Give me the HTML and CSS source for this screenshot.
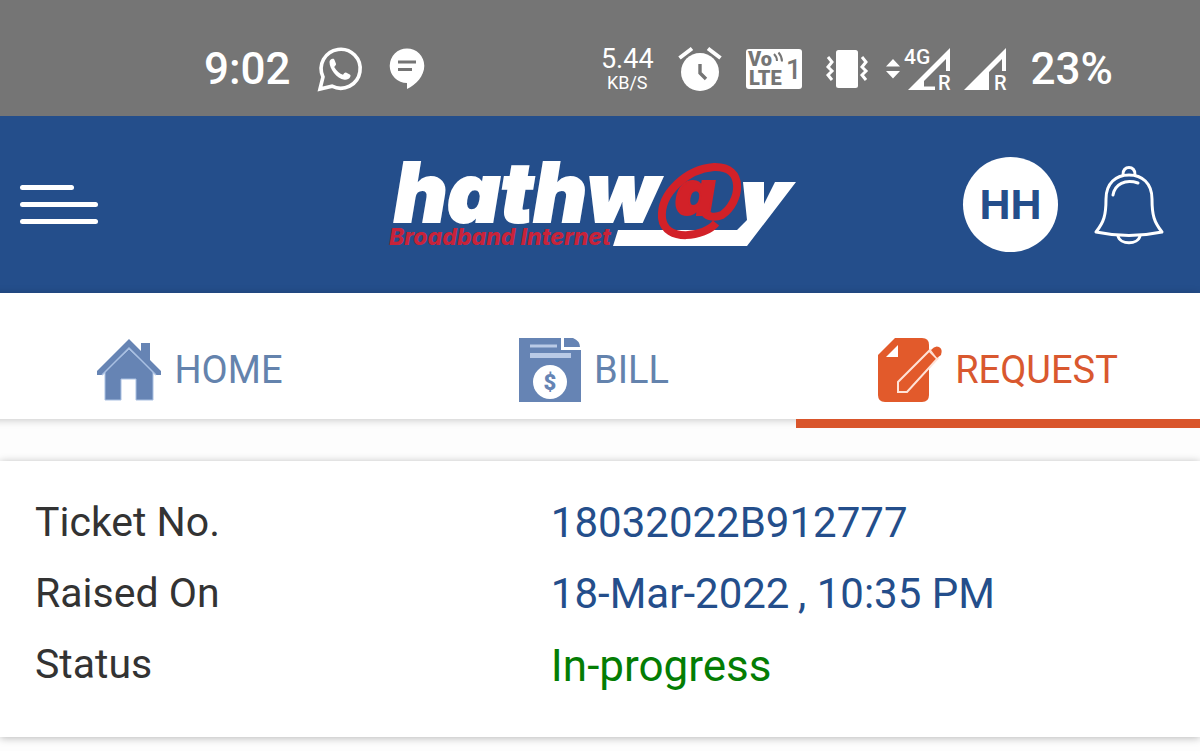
FILE: index.html
```html
<!DOCTYPE html>
<html lang="en">
<head>
<meta charset="utf-8">
<meta name="viewport" content="width=device-width, initial-scale=1">
<title>Hathway – Request</title>
<link rel="stylesheet" href="styles.css">
</head>
<body>
<div class="status-bar">
  <div class="status-group status-left">
    <span class="status-time">9:02</span>
    <svg class="icon" width="44" height="44" viewBox="0 0 44 44" aria-hidden="true">
      <path d="M2 42 5 30A19.500 19.500 0 1 1 14 39.200Z" fill="none" stroke="#fff" stroke-width="3.600" stroke-linejoin="miter"/>
      <path d="M11.500 15c0-2 2-3.500 3.500-3.200 1 0 1.300.6 1.700 1.600l1.200 3c.4 1-.1 1.700-1.700 3.500 2.300 4.200 5.500 6.600 8.800 7.900 1.300-1.700 2-2.600 3-2.200l3.800 1.900c1 .5.8 1.500.4 2.500-.9 2.200-3.600 3-5.700 2.700C18.500 31.500 11.500 22 11.500 15Z" fill="#fff"/>
    </svg>
    <svg class="icon" width="36" height="42" viewBox="0 0 36 42" aria-hidden="true">
      <path d="M18 .5a17.300 17.300 0 1 0 0 34.600V41c9-4 17.300-13 17.300-23.200A17.300 17.300 0 0 0 18 .5Z" fill="#fff"/>
      <path d="M9 14h18M9 21.500h14" stroke="#757575" stroke-width="3"/>
    </svg>
  </div>
  <div class="status-group status-right">
    <div class="net-speed"><span class="net-value">5.44</span><span class="net-unit">KB/S</span></div>
    <svg class="icon" width="44" height="46" viewBox="0 0 44 46" aria-hidden="true">
      <circle cx="22" cy="26" r="19" fill="#fff"/>
      <path d="M1.500 12 14 2.500M42.500 12 30 2.500" stroke="#fff" stroke-width="4"/>
      <path d="M22 18v9l6 6" fill="none" stroke="#757575" stroke-width="3.400"/>
    </svg>
    <svg class="icon" width="56" height="40" viewBox="0 0 56 40" role="img" aria-label="VoLTE 1">
      <rect width="56" height="40" rx="3" fill="#fff"/>
      <g fill="#757575" font-family="Roboto, sans-serif" font-weight="900">
        <text x="2" y="17" font-size="20">Vo</text>
        <text x="3" y="36" font-size="20">LTE</text>
        <text x="40" y="30" font-size="27" font-weight="500">1</text>
      </g>
      <path d="M28 5q3 3 3 7M32.500 3.500q3.500 4 3.500 9" fill="none" stroke="#757575" stroke-width="2"/>
    </svg>
    <svg class="icon" width="42" height="38" viewBox="0 0 42 38" aria-hidden="true">
      <rect x="10" width="22" height="38" rx="2.500" fill="#fff"/>
      <path d="m2 7 4 5-4 5 4 4-4 4 4 5M40 30l-4-5 4-4-4-4 4-5-4-5" fill="none" stroke="#fff" stroke-width="3"/>
    </svg>
    <svg class="icon signal-data" width="65" height="44" viewBox="0 0 65 44" role="img" aria-label="4G roaming">
      <path d="M0 19.500 7 12l7 7.500ZM0 24h14l-7 7.500Z" fill="#fff"/>
      <g fill="#fff" font-family="Roboto, sans-serif" font-weight="500">
        <text x="18" y="17" font-size="21">4G</text>
        <text x="52" y="43" font-size="20">R</text>
      </g>
      <path fill-rule="evenodd" d="M22 43 64 1v23h-4V12L38 34v5.500l11 0V43Z" fill="#fff"/>
    </svg>
    <svg class="icon" width="43" height="44" viewBox="0 0 43 44" role="img" aria-label="Second SIM roaming">
      <path d="M0 43 42 1v23h-4V12L25 25v18Z" fill="#fff"/>
      <text x="30" y="43" fill="#fff" font-family="Roboto, sans-serif" font-weight="500" font-size="20">R</text>
    </svg>
    <span class="status-battery">23%</span>
  </div>
</div>

<header class="app-header">
  <button class="menu-button" type="button" aria-label="Menu">
    <span class="menu-line menu-line-short"></span>
    <span class="menu-line"></span>
    <span class="menu-line"></span>
  </button>
  <a class="logo" href="#" aria-label="Hathway Broadband Internet">
    <svg class="icon" width="406" height="88" viewBox="0 0 406 88" aria-hidden="true">
      <text class="logo-word" x="5" y="61">hathw</text>
      <path d="M229 69H348L358 59 354 21H375L375 43 386 21H407L358 85H224Z" fill="#fff"/>
      <text class="logo-at" x="286" y="54">a</text>
      <path d="M327 62C316 76 276 82 273 57 271 32 298 8 325 6 357 5 352 41 333 54 326 57 319 56 316 52" fill="none" stroke="#d22128" stroke-width="8"/>
      <text class="logo-tag" x="0" y="84">Broadband Internet</text>
    </svg>
  </a>
  <div class="header-actions">
    <button class="avatar" type="button" aria-label="Account HH">HH</button>
    <button class="bell-button" type="button" aria-label="Notifications">
      <svg class="icon" width="70" height="80" viewBox="0 0 70 80" aria-hidden="true">
        <g fill="none" stroke="#fff" stroke-width="3" stroke-linejoin="round" stroke-linecap="round">
          <path d="M2 67C10 57 12 50 12 34 12 18 22 10 35 10S58 18 58 34C58 50 60 57 68 67Q35 74 2 67Z"/>
          <path d="M29 10C28 0 42 0 41 10M24 71C26 80 44 80 46 71"/>
          <path d="M19 30C21 19 31 14 44 18"/>
        </g>
      </svg>
    </button>
  </div>
</header>

<nav class="tabs" aria-label="Main">
  <a class="tab" href="#">
    <svg class="icon" width="64" height="64" viewBox="0 0 64 64" aria-hidden="true">
      <path d="M8 33 32 11 56 33V62H39V41H24V62H8Z" fill="#6684b4" stroke="#a9c0e2" stroke-width="1"/>
      <path d="M0 33 32 1 44 13V5H53V22L64 33V37H59L32 10 5 37H0Z" fill="#6684b4"/>
      <path d="m5 37 27-27 27 27" fill="none" stroke="#a9c0e2" stroke-width="1.500"/>
    </svg>
    HOME
  </a>
  <a class="tab" href="#">
    <svg class="icon" width="62" height="64" viewBox="0 0 62 64" aria-hidden="true">
      <path d="M0 0H42V12H62V64H0ZM45 0H54Q61 3 61 9H45Z" fill="#6684b4"/>
      <path d="M11 8h27" stroke="#b9cae6" stroke-width="3"/>
      <path d="M11 17.500h41" stroke="#b9cae6" stroke-width="5"/>
      <circle cx="31" cy="44" r="17" fill="#fff"/>
      <text x="31" y="52" text-anchor="middle" font-family="Roboto, sans-serif" font-weight="900" font-size="22" fill="#6684b4">$</text>
    </svg>
    BILL
  </a>
  <a class="tab tab-active" href="#" aria-current="page">
    <svg class="icon" width="64" height="64" viewBox="0 0 64 64" aria-hidden="true">
      <path d="M17 0H44Q51 0 51 7V57Q51 64 44 64H7Q0 64 0 57V17Z" fill="#e25a2b"/>
      <path d="M8 19H20V7Z" fill="#fff"/>
      <path d="M20 54V44L52 12 60 20 29 54Z" fill="#e25a2b" stroke="#ffe3d8" stroke-width="2"/>
      <path d="M53 12q4-5 8-3t2 8l-4 3Z" fill="#e25a2b"/>
      <path d="m51 13 8 8" stroke="#ffe3d8" stroke-width="1.500"/>
    </svg>
    REQUEST
  </a>
</nav>

<main class="content">
  <section class="ticket-card" aria-label="Ticket details">
    <dl class="ticket-details">
      <dt>Ticket No.</dt><dd>18032022B912777</dd>
      <dt>Raised On</dt><dd>18-Mar-2022&thinsp;, 10:35 PM</dd>
      <dt>Status</dt><dd class="ticket-status">In-progress</dd>
    </dl>
  </section>
</main>
</body>
</html>
```
FILE: styles.css
```css
* {
  box-sizing: border-box;
}

body {
  margin: 0;
  background: #fdfdfd;
  color: #333;
  font-family: Roboto, sans-serif;
  overflow-x: hidden;
}

button {
  margin: 0;
  padding: 0;
  border: 0;
  background: none;
  font: inherit;
  cursor: pointer;
}

a {
  color: inherit;
  text-decoration: none;
}

.icon {
  display: block;
  flex: none;
  overflow: visible;
}

.status-bar {
  display: flex;
  align-items: center;
  justify-content: space-between;
  padding: 40px 87px 18px 204px;
  background: #757575;
  color: #fff;
}

.status-group {
  display: flex;
  align-items: center;
  height: 58px;
}

.status-left {
  gap: 27px;
}

.status-right {
  gap: 24px;
}

.signal-data {
  margin: 0 -11px 0 -6px;
}

.status-time,
.status-battery {
  font-size: 44px;
  font-weight: 500;
  line-height: 58px;
}

.net-speed {
  display: flex;
  flex-direction: column;
  align-items: center;
}

.net-value {
  font-size: 27px;
  line-height: 28px;
}

.net-unit {
  font-size: 18px;
  line-height: 20px;
}

.app-header {
  display: grid;
  grid-template-columns: 1fr auto 1fr;
  align-items: center;
  padding: 41px 36px 41px 20px;
  background: #244e8b;
}

.menu-button {
  display: flex;
  flex-direction: column;
  gap: 12px;
  width: 78px;
}

.menu-line {
  width: 100%;
  height: 5px;
  border-radius: 3px;
  background: #fff;
}

.menu-line-short {
  width: 54px;
}

.logo-word {
  fill: #fff;
  stroke: #fff;
  stroke-width: 2px;
  font-family: Inter, sans-serif;
  font-size: 82px;
  font-style: italic;
  font-weight: 900;
}

.logo-at {
  fill: #d22128;
  stroke: #d22128;
  stroke-width: 2px;
  font-family: Inter, sans-serif;
  font-size: 62px;
  font-style: italic;
  font-weight: 900;
}

.logo-tag {
  fill: #c8233a;
  font-family: Inter, sans-serif;
  font-size: 23px;
  font-style: italic;
  font-weight: 800;
}

.header-actions {
  display: flex;
  align-items: center;
  justify-content: flex-end;
  gap: 36px;
}

.avatar {
  width: 95px;
  height: 95px;
  border-radius: 50%;
  background: #fff;
  color: #244e8b;
  font-family: "Liberation Sans", sans-serif;
  font-size: 43px;
  font-weight: 700;
}

.tabs {
  display: grid;
  grid-template-columns: repeat(3, 1fr);
  margin-left: -12px;
  background: #fff;
  box-shadow: 0 1px 8px rgba(0, 0, 0, 0.22);
}

.tab {
  display: flex;
  align-items: center;
  justify-content: center;
  gap: 13px;
  height: 126px;
  padding-top: 28px;
  color: #6483ad;
  font-size: 38px;
}

.tab-active {
  height: 135px;
  margin-bottom: -9px;
  border-bottom: 9px solid #d9552b;
  color: #d9582f;
}

.content {
  padding: 42px 0 14px;
}

.ticket-card {
  padding: 26px 35px 37px;
  background: #fff;
  box-shadow: 0 1px 8px rgba(0, 0, 0, 0.28);
}

.ticket-details {
  display: grid;
  grid-template-columns: 21fr 25fr;
  margin: 0;
  font-size: 42px;
  line-height: 71px;
}

.ticket-details dt {
  font-size: 41px;
}

.ticket-details dd {
  margin: 0;
  color: #244e8b;
}

.ticket-details .ticket-status {
  padding-top: 2px;
  margin-bottom: -2px;
  color: #047d04;
  font-size: 44px;
}
```
